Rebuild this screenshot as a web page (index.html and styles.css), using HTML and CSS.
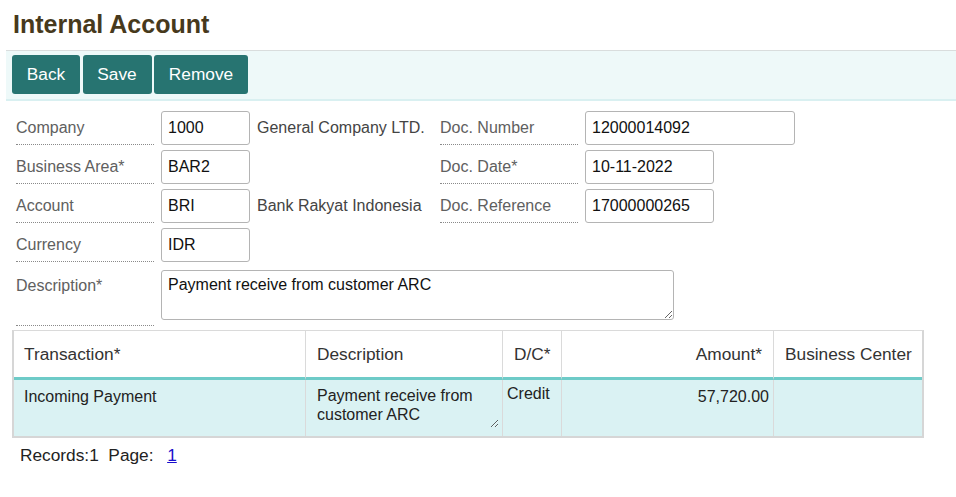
FILE: index.html
```html
<!DOCTYPE html>
<html>
<head>
<meta charset="utf-8">
<title>Internal Account</title>
<link rel="stylesheet" href="styles.css">
</head>
<body>
<h1 class="title">Internal Account</h1>
<div class="toolbar">
  <button class="btn">Back</button>
  <button class="btn">Save</button>
  <button class="btn">Remove</button>
</div>
<div class="form">
  <label class="lbl">Company</label>
  <input class="inp w-s" value="1000">
  <span class="info">General Company LTD.</span>
  <label class="lbl">Doc. Number</label>
  <input class="inp w-l" value="12000014092">

  <label class="lbl">Business Area*</label>
  <input class="inp w-s" value="BAR2">
  <span class="info"></span>
  <label class="lbl">Doc. Date*</label>
  <input class="inp w-m" value="10-11-2022">

  <label class="lbl">Account</label>
  <input class="inp w-s" value="BRI">
  <span class="info">Bank Rakyat Indonesia</span>
  <label class="lbl">Doc. Reference</label>
  <input class="inp w-m" value="17000000265">

  <label class="lbl">Currency</label>
  <input class="inp w-s" value="IDR">
  <span class="info"></span>
  <span class="blank"></span>
  <span class="blank"></span>

  <label class="lbl lbl-top">Description*</label>
  <textarea class="area">Payment receive from customer ARC</textarea>
</div>
<table class="grid">
  <colgroup>
    <col class="c1"><col class="c2"><col class="c3"><col class="c4"><col class="c5">
  </colgroup>
  <thead>
    <tr>
      <th class="first">Transaction*</th>
      <th>Description</th>
      <th>D/C*</th>
      <th class="num">Amount*</th>
      <th>Business Center</th>
    </tr>
  </thead>
  <tbody>
    <tr>
      <td class="first">Incoming Payment</td>
      <td class="cell-area"><textarea class="line-area">Payment receive from customer ARC</textarea></td>
      <td class="dc">Credit</td>
      <td class="num">57,720.00</td>
      <td></td>
    </tr>
  </tbody>
</table>
<div class="pager">Records:1&nbsp; Page:&nbsp; <a href="#" class="page-link">1</a></div>
</body>
</html>
```
FILE: styles.css
```css
html, body {
  margin: 0;
  padding: 0;
}
body {
  padding-left: 6px;
  font-family: "Liberation Sans", Arial, sans-serif;
  background: #fff;
  color: #222;
}
.title {
  margin: 0 0 12px 0;
  padding: 10px 0 0 7px;
  font-size: 25px;
  line-height: 28px;
  font-weight: bold;
  color: #47391c;
}
.toolbar {
  display: flex;
  gap: 2.5px;
  padding: 4px 0 5px 6px;
  background: #eef9f9;
  border-top: 1px solid #d9dddd;
  border-bottom: 2px solid #d9f0f1;
}
.btn {
  height: 39px;
  padding: 0 14.8px;
  border: none;
  border-radius: 3px;
  background: #277471;
  color: #fff;
  font-family: "Liberation Sans", Arial, sans-serif;
  font-size: 17.3px;
  cursor: pointer;
}
.form {
  display: grid;
  grid-template-columns: 138px 89px 176px 138px auto;
  grid-template-rows: repeat(4, 34px) 59px;
  column-gap: 7px;
  row-gap: 5px;
  padding: 10px 0 0 10px;
}
.lbl {
  display: flex;
  align-items: center;
  box-sizing: border-box;
  border-bottom: 1px dotted #8a8a8a;
  font-size: 16px;
  color: #606060;
}
.lbl-top {
  align-items: flex-start;
  padding-top: 10px;
}
.info {
  display: flex;
  align-items: center;
  font-size: 16px;
  color: #444;
}
.inp {
  box-sizing: border-box;
  height: 34px;
  margin: 0;
  padding: 0 6px;
  border: 1px solid #b4b4b4;
  border-radius: 3px;
  font-family: "Liberation Sans", Arial, sans-serif;
  font-size: 16px;
  color: #111;
  background: #fff;
  justify-self: start;
}
.w-s { width: 89px; }
.w-m { width: 129px; }
.w-l { width: 210px; }
.area {
  grid-column: 2 / span 4;
  box-sizing: border-box;
  width: 513px;
  height: 50px;
  margin: 3px 0 0 0;
  padding: 5px 6px 2px 6px;
  border: 1px solid #b4b4b4;
  border-radius: 3px;
  font-family: "Liberation Sans", Arial, sans-serif;
  font-size: 16px;
  color: #111;
  align-self: start;
}
.grid {
  margin: 4px 0 0 6px;
  width: 912px;
  table-layout: fixed;
  border-collapse: separate;
  border-spacing: 0;
  border-top: 1px solid #dadada;
  border-left: 2px solid #d6d6d6;
  border-right: 2px solid #d6d6d6;
  border-bottom: 2px solid #d6d6d6;
}
.c1 { width: 291px; }
.c2 { width: 197px; }
.c3 { width: 59px; }
.c4 { width: 212px; }
.c5 { width: 149px; }
.grid th {
  height: 46px;
  padding: 0 11px;
  font-size: 17.3px;
  font-weight: normal;
  text-align: left;
  color: #333;
  background: #fff;
  border-left: 1px solid #dadada;
  border-bottom: 3px solid #6ecbc8;
  white-space: nowrap;
}
.grid td {
  height: 56px;
  box-sizing: border-box;
  padding: 8px 11px 0 11px;
  vertical-align: top;
  font-size: 16px;
  color: #222;
  background: #daf2f3;
  border-left: 1px solid #dadada;
}
.grid th.first, .grid td.first {
  border-left: none;
  padding-left: 10px;
}
.grid th.num {
  text-align: right;
}
.grid td.num {
  text-align: right;
  padding-right: 4px;
}
.grid td.dc {
  padding: 5px 4px 0 4px;
}
.grid td.cell-area {
  padding: 4px 3px 0 4px;
}
.line-area {
  display: block;
  box-sizing: border-box;
  width: 189px;
  height: 44px;
  margin: 0;
  padding: 2px 7px;
  border: none;
  background: transparent;
  font-family: "Liberation Sans", Arial, sans-serif;
  font-size: 16px;
  line-height: 19px;
  color: #222;
  overflow: hidden;
}
.pager {
  margin: 7px 0 0 0;
  padding-left: 14px;
  font-size: 17.3px;
  line-height: 20px;
  color: #222;
}
.page-link {
  color: #1a0dcc;
  margin-left: 4px;
}
```
